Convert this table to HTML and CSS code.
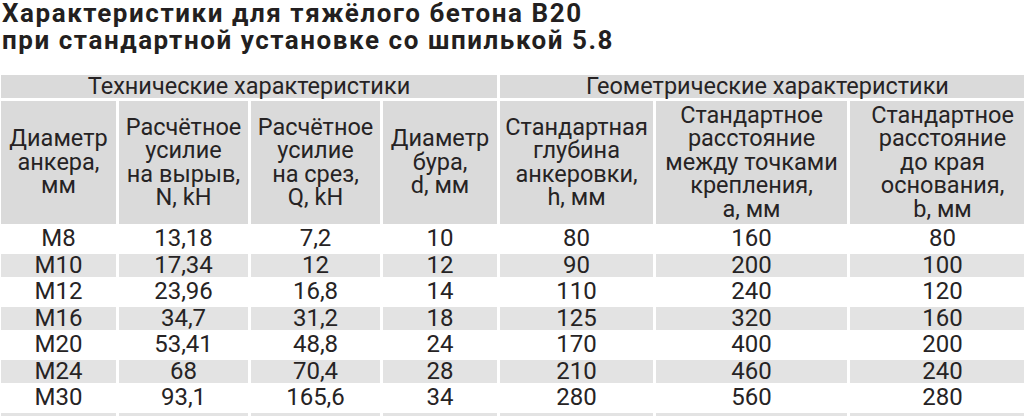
FILE: index.html
```html
<!DOCTYPE html>
<html lang="ru">
<head>
<meta charset="utf-8">
<title>Характеристики для тяжёлого бетона B20</title>
<link rel="stylesheet" href="styles.css">
</head>
<body>
<h1 class="title">Характеристики для тяжёлого бетона B20<br>при стандартной установке со шпилькой 5.8</h1>
<table class="spec">
  <colgroup>
    <col class="c1"><col class="c2"><col class="c3"><col class="c4"><col class="c5"><col class="c6"><col class="c7">
  </colgroup>
  <thead>
    <tr class="group">
      <th colspan="4">Технические характеристики</th>
      <th colspan="3">Геометрические характеристики</th>
    </tr>
    <tr class="heads">
      <th>Диаметр<br>анкера,<br>мм</th>
      <th>Расчётное<br>усилие<br>на вырыв,<br>N, kH</th>
      <th>Расчётное<br>усилие<br>на срез,<br>Q, kH</th>
      <th>Диаметр<br>бура,<br>d, мм</th>
      <th>Стандартная<br>глубина<br>анкеровки,<br>h, мм</th>
      <th>Стандартное<br>расстояние<br>между точками<br>крепления,<br>a, мм</th>
      <th>Стандартное<br>расстояние<br>до края<br>основания,<br>b, мм</th>
    </tr>
  </thead>
  <tbody>
    <tr><td>M8</td><td>13,18</td><td>7,2</td><td>10</td><td>80</td><td>160</td><td>80</td></tr>
    <tr class="alt"><td>M10</td><td>17,34</td><td>12</td><td>12</td><td>90</td><td>200</td><td>100</td></tr>
    <tr><td>M12</td><td>23,96</td><td>16,8</td><td>14</td><td>110</td><td>240</td><td>120</td></tr>
    <tr class="alt"><td>M16</td><td>34,7</td><td>31,2</td><td>18</td><td>125</td><td>320</td><td>160</td></tr>
    <tr><td>M20</td><td>53,41</td><td>48,8</td><td>24</td><td>170</td><td>400</td><td>200</td></tr>
    <tr class="alt"><td>M24</td><td>68</td><td>70,4</td><td>28</td><td>210</td><td>460</td><td>240</td></tr>
    <tr><td>M30</td><td>93,1</td><td>165,6</td><td>34</td><td>280</td><td>560</td><td>280</td></tr>
    <tr class="alt tail"><td></td><td></td><td></td><td></td><td></td><td></td><td></td></tr>
  </tbody>
</table>
</body>
</html>
```

FILE: styles.css
```css
html, body {
  margin: 0;
  padding: 0;
  background: #ffffff;
  overflow: hidden;
}
body {
  width: 1024px;
  height: 416px;
  color: #262324;
  font-family: Roboto, "Liberation Sans", sans-serif;
}
.title {
  margin: 0;
  padding: 0 0 0 2px;
  font-family: Roboto, "Liberation Sans", sans-serif;
  font-weight: 700;
  font-size: 26px;
  line-height: 27px;
  letter-spacing: 1.55px;
  color: #231f20;
  height: 60px;
}
.spec {
  margin: 12px 0 0 -2px;
  width: 1040px;
  table-layout: fixed;
  border-collapse: separate;
  border-spacing: 3px 3px;
  font-size: 24px;
}
.c1 { width: 115px; }
.c2 { width: 129px; }
.c3 { width: 129px; }
.c4 { width: 114px; }
.c5 { width: 153px; }
.c6 { width: 191px; }
.c7 { width: auto; }
.spec th {
  font-weight: 400;
  font-size: 23.5px;
  background: #dadada;
  padding: 0;
  text-align: center;
  vertical-align: middle;
}
.group th {
  height: 23px;
  line-height: 23px;
}
.heads th {
  height: 123px;
  line-height: 23.5px;
}
.spec td {
  padding: 0;
  height: 23.5px;
  line-height: 23.5px;
  text-align: center;
}
.alt td {
  background: #e3e3e3;
}
.tail td {
  height: 10px;
}
```
